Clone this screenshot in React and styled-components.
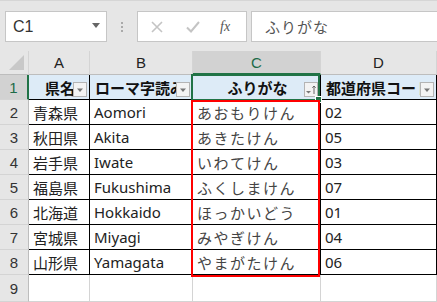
import React from 'react';
import styled, { createGlobalStyle } from 'styled-components';

const GlobalStyle = createGlobalStyle`
  body {
    margin: 0;
    background: #ffffff;
    overflow: hidden;
    font-family: "Noto Sans CJK JP", "Noto Sans", sans-serif;
  }
`;

const Window = styled.div`
  width: 437px;
  height: 302px;
  background: #ffffff;
  overflow: hidden;
`;

const FormulaBar = styled.div`
  height: 51px;
  box-sizing: border-box;
  background: #e6e6e6;
  border-top: 1px solid #d6d6d6;
  display: flex;
  align-items: flex-start;
  padding: 10px 0 0 5px;
`;

const NameBox = styled.div`
  width: 102px;
  height: 31px;
  box-sizing: border-box;
  background: #fff;
  border: 1px solid #c6c6c6;
  display: flex;
  align-items: center;
  justify-content: space-between;
  padding: 0 6px 0 7px;
  font-family: "Liberation Sans", "Noto Sans", sans-serif;
  font-size: 16px;
  color: #333;
`;

const Caret = styled.span`
  width: 0;
  height: 0;
  border-left: 4px solid transparent;
  border-right: 4px solid transparent;
  border-top: 5px solid #666;
  margin-top: -3px;
`;

const Grip = styled.div`
  width: 30px;
  height: 31px;
  display: flex;
  flex-direction: column;
  align-items: center;
  justify-content: center;
  gap: 2px;
  span {
    width: 2px;
    height: 2px;
    background: #aaa;
  }
`;

const ButtonBox = styled.div`
  width: 110px;
  height: 31px;
  box-sizing: border-box;
  background: #fff;
  border: 1px solid #c6c6c6;
  display: flex;
  align-items: center;
  padding-left: 13px;
`;

const BarIcon = styled.span`
  display: flex;
  align-items: center;
  margin-left: ${({ $ml }) => $ml || 0}px;
`;

const Fx = styled.span`
  font-family: "Liberation Serif", serif;
  font-style: italic;
  font-size: 14px;
  color: #555;
  margin-left: 20px;
`;

const FormulaInput = styled.div`
  flex: 1;
  margin-left: 4px;
  height: 31px;
  box-sizing: border-box;
  background: #fff;
  border: 1px solid #c6c6c6;
  border-right: none;
  display: flex;
  align-items: center;
  padding-left: 13px;
  font-size: 15px;
  color: #555;
  letter-spacing: 1px;
`;

const SheetWrap = styled.div`
  position: relative;
`;

const Sheet = styled.div`
  display: grid;
  grid-template-columns: 29px 61px 103px 128px 116px;
  grid-template-rows: 24px 25px repeat(7, 25px) 27px;
`;

const Corner = styled.div`
  background: #e6e6e6;
  border-right: 1px solid #d4d4d4;
  border-bottom: 1px solid #bdbdbd;
  box-sizing: border-box;
  position: relative;
  &::after {
    content: '';
    position: absolute;
    right: 4px;
    bottom: 4px;
    border-left: 15px solid transparent;
    border-bottom: 15px solid #c8c8c8;
  }
`;

const ColHead = styled.div`
  box-sizing: border-box;
  background: ${({ $sel }) => ($sel ? '#d2d2d2' : '#e6e6e6')};
  border-right: 1px solid #d4d4d4;
  border-bottom: ${({ $sel }) => ($sel ? '2px solid #217346' : '1px solid #bdbdbd')};
  display: flex;
  align-items: center;
  justify-content: center;
  font-family: "Liberation Sans", sans-serif;
  font-size: 15px;
  color: ${({ $sel }) => ($sel ? '#1d6b48' : '#222')};
  padding-top: ${({ $sel }) => ($sel ? '1px' : '0')};
`;

const RowHead = styled.div`
  box-sizing: border-box;
  background: ${({ $sel }) => ($sel ? '#d2d2d2' : '#e6e6e6')};
  border-right: ${({ $sel }) => ($sel ? '2px solid #217346' : '1px solid #bdbdbd')};
  border-bottom: 1px solid #d4d4d4;
  display: flex;
  align-items: center;
  justify-content: center;
  font-family: "Liberation Sans", sans-serif;
  font-size: 15px;
  color: ${({ $sel }) => ($sel ? '#1d6b48' : '#333')};
`;

const HeadCell = styled.div`
  box-sizing: border-box;
  background: #ddebf7;
  border-right: 1px solid #000;
  border-bottom: 1px solid #000;
  display: flex;
  align-items: center;
  justify-content: ${({ $left }) => ($left ? 'flex-start' : 'center')};
  padding: ${({ $left }) => ($left ? '0 0 0 5px' : '0 0 0 2px')};
  font-weight: bold;
  font-size: 15px;
  color: #111;
  position: relative;
  overflow: hidden;
  white-space: nowrap;
`;

const FilterBtn = styled.span`
  position: absolute;
  right: 2px;
  top: 7px;
  width: 14px;
  height: 15px;
  box-sizing: border-box;
  background: #f3f3f3;
  border: 1px solid #b4b4b4;
  display: flex;
  align-items: center;
  justify-content: center;
`;

const Cell = styled.div`
  box-sizing: border-box;
  border-right: ${({ $grid }) => ($grid ? '1px solid #d4d4d4' : '1px solid #000')};
  border-bottom: ${({ $grid }) => ($grid ? '1px solid #d4d4d4' : '1px solid #000')};
  display: flex;
  align-items: center;
  padding-left: 4px;
  font-family: ${({ $latin }) =>
    $latin ? '"Noto Sans", "Noto Sans CJK JP", sans-serif' : '"Noto Sans CJK JP", sans-serif'};
  font-size: 15px;
  color: ${({ $kana }) => ($kana ? '#444' : '#222')};
  letter-spacing: ${({ $kana }) => ($kana ? '1.5px' : '0')};
  white-space: nowrap;
  overflow: hidden;
`;

const Selection = styled.div`
  position: absolute;
  left: 191px;
  top: 23px;
  width: 129px;
  height: 27px;
  box-sizing: border-box;
  border: 2px solid #217346;
  pointer-events: none;
  &::after {
    content: '';
    position: absolute;
    right: -4px;
    bottom: -4px;
    width: 5px;
    height: 5px;
    background: #217346;
    border: 1px solid #fff;
  }
`;

const RedBox = styled.div`
  position: absolute;
  left: 191px;
  top: 49px;
  width: 129px;
  height: 177px;
  box-sizing: border-box;
  border: 2px solid #ff0000;
  pointer-events: none;
`;

const DownArrow = () => (
  <svg width="8" height="6" viewBox="0 0 8 6">
    <path d="M1 1.5h6L4 5z" fill="#777" />
  </svg>
);

const SortArrow = () => (
  <svg width="12" height="11" viewBox="0 0 12 11">
    <path d="M1 7h5L3.5 9.5z" fill="#777" />
    <path d="M9 2v8M7.3 3.7L9 2l1.7 1.7" stroke="#666" strokeWidth="1" fill="none" />
  </svg>
);

const CrossIcon = () => (
  <svg width="12" height="12" viewBox="0 0 12 12">
    <path d="M1 1l10 10M11 1L1 11" stroke="#c4c4c4" strokeWidth="1.6" />
  </svg>
);

const CheckIcon = () => (
  <svg width="14" height="12" viewBox="0 0 14 12">
    <path d="M1 6.5l4 4L13 1" stroke="#c4c4c4" strokeWidth="2" fill="none" />
  </svg>
);

const rows = [
  ['青森県', 'Aomori', 'あおもりけん', '02'],
  ['秋田県', 'Akita', 'あきたけん', '05'],
  ['岩手県', 'Iwate', 'いわてけん', '03'],
  ['福島県', 'Fukushima', 'ふくしまけん', '07'],
  ['北海道', 'Hokkaido', 'ほっかいどう', '01'],
  ['宮城県', 'Miyagi', 'みやぎけん', '04'],
  ['山形県', 'Yamagata', 'やまがたけん', '06'],
];

export default function App() {
  return (
    <Window>
      <GlobalStyle />
      <FormulaBar>
        <NameBox>
          C1
          <Caret />
        </NameBox>
        <Grip>
          <span />
          <span />
          <span />
        </Grip>
        <ButtonBox>
          <BarIcon>
            <CrossIcon />
          </BarIcon>
          <BarIcon $ml={23}>
            <CheckIcon />
          </BarIcon>
          <Fx>fx</Fx>
        </ButtonBox>
        <FormulaInput>ふりがな</FormulaInput>
      </FormulaBar>
      <SheetWrap>
        <Sheet>
          <Corner />
          <ColHead>A</ColHead>
          <ColHead>B</ColHead>
          <ColHead $sel>C</ColHead>
          <ColHead>D</ColHead>

          <RowHead $sel>1</RowHead>
          <HeadCell>
            県名
            <FilterBtn>
              <DownArrow />
            </FilterBtn>
          </HeadCell>
          <HeadCell $left>
            ローマ字読み
            <FilterBtn>
              <DownArrow />
            </FilterBtn>
          </HeadCell>
          <HeadCell>
            ふりがな
            <FilterBtn>
              <SortArrow />
            </FilterBtn>
          </HeadCell>
          <HeadCell $left>
            都道府県コード
            <FilterBtn>
              <DownArrow />
            </FilterBtn>
          </HeadCell>

          {rows.map((r, i) => (
            <React.Fragment key={r[0]}>
              <RowHead>{i + 2}</RowHead>
              <Cell>{r[0]}</Cell>
              <Cell $latin>{r[1]}</Cell>
              <Cell $kana>{r[2]}</Cell>
              <Cell $latin>{r[3]}</Cell>
            </React.Fragment>
          ))}

          <RowHead>9</RowHead>
          <Cell $grid />
          <Cell $grid />
          <Cell $grid />
          <Cell $grid />
        </Sheet>
        <Selection />
        <RedBox />
      </SheetWrap>
    </Window>
  );
}
